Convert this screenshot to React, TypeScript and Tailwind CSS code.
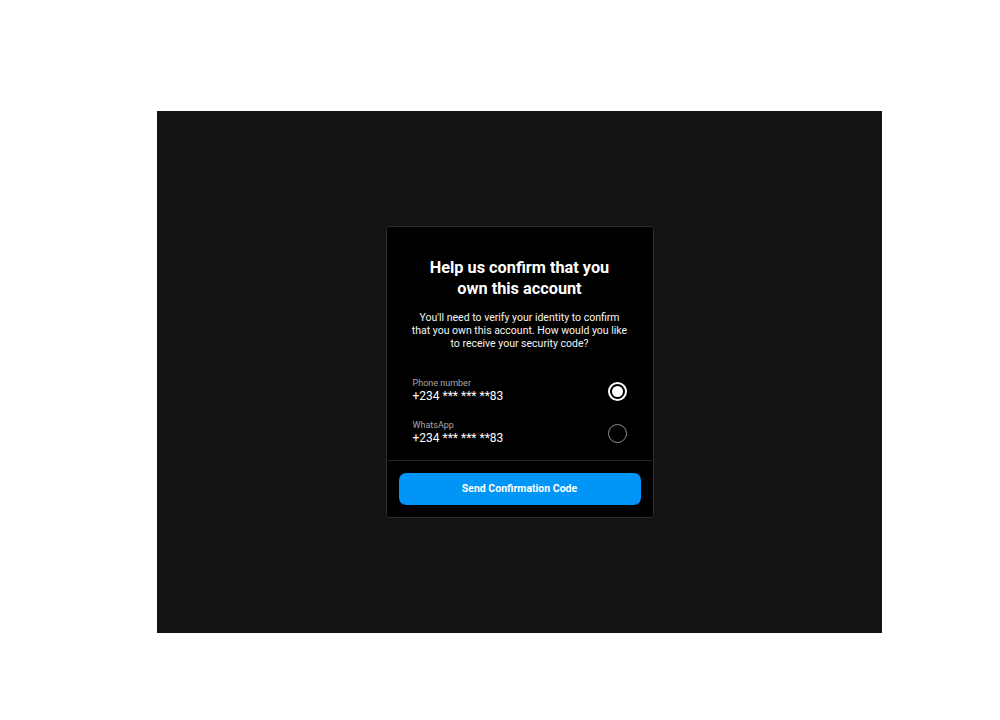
import { useState } from "react";

const OPTIONS = [
  { id: "phone", label: "Phone number", value: "+234 *** *** **83" },
  { id: "whatsapp", label: "WhatsApp", value: "+234 *** *** **83" },
];

function Radio({ checked }: { checked: boolean }) {
  if (checked) {
    return (
      <span className="flex h-[19px] w-[19px] items-center justify-center rounded-full border-2 border-white">
        <span className="h-[11px] w-[11px] rounded-full bg-white" />
      </span>
    );
  }
  return <span className="block h-[19px] w-[19px] rounded-full border-[1.5px] border-[#8e8e8e]" />;
}

export default function App() {
  const [selected, setSelected] = useState("phone");

  return (
    <div className="h-[720px] w-[1000px] bg-white pl-[157px] pt-[111px] font-['Roboto',sans-serif]">
      <div className="flex h-[522px] w-[725px] items-center justify-center bg-[#131313]">
        <div className="w-[268px] rounded-[3px] border border-[#2b2b2b] bg-black">
          <div className="flex flex-col items-center px-[20px] pt-[30px] pb-[14px] text-center">
            <h2 className="text-[16.3px] leading-[21px] font-bold text-white">
              Help us confirm that you
              <br />
              own this account
            </h2>
            <p className="mt-[12px] w-[219px] text-[10.5px] leading-[13px] text-[#f5f5f5]">
              You'll need to verify your identity to confirm that you own this account. How would you like to receive your security code?
            </p>
          </div>

          <div className="flex flex-col gap-[16px] px-[26px] pt-[14px] pb-[14px]">
            {OPTIONS.map((o) => (
              <button
                key={o.id}
                onClick={() => setSelected(o.id)}
                className="flex items-center justify-between text-left"
              >
                <div className="flex flex-col">
                  <span className="text-[9px] leading-[11px] text-[#a8a8a8]">{o.label}</span>
                  <span className="text-[12px] leading-[15px] text-white">{o.value}</span>
                </div>
                <Radio checked={selected === o.id} />
              </button>
            ))}
          </div>

          <div className="border-t border-[#262626] px-[12px] pt-[12px] pb-[12px]">
            <button className="h-[32px] w-full rounded-[7px] bg-[#0095f6] text-[10.5px] font-bold text-white">
              Send Confirmation Code
            </button>
          </div>
        </div>
      </div>
    </div>
  );
}
